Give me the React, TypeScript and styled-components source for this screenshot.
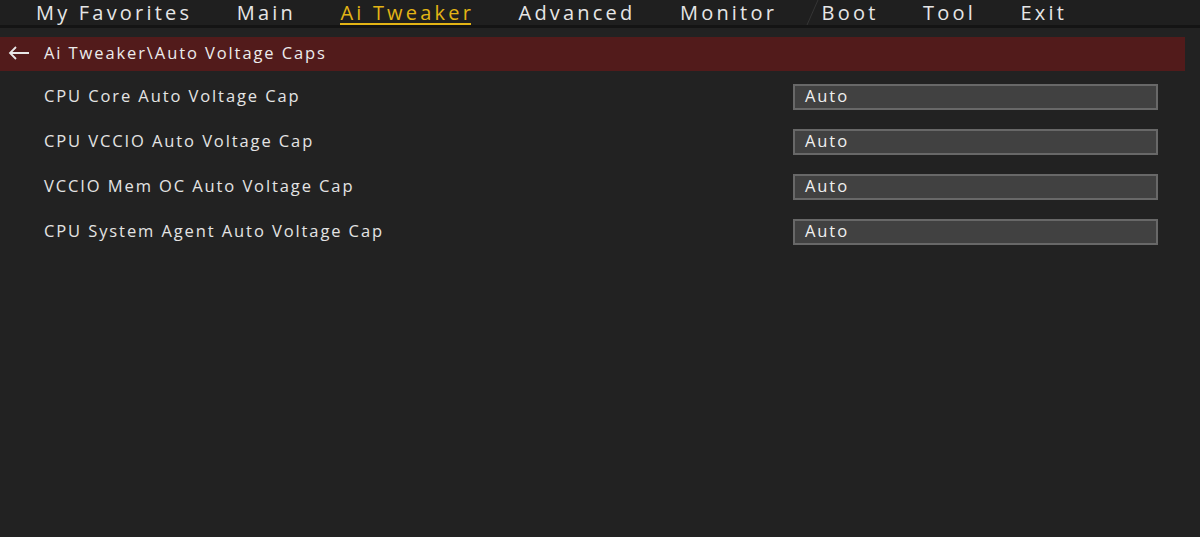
import styled, { createGlobalStyle } from "styled-components";

const GlobalStyle = createGlobalStyle`
  html, body {
    margin: 0;
    padding: 0;
    background: #222222;
  }
  body {
    font-family: "Open Sans", "Noto Sans", "DejaVu Sans", sans-serif;
    -webkit-font-smoothing: antialiased;
  }
`;

const tabs = [
  "My Favorites",
  "Main",
  "Ai Tweaker",
  "Advanced",
  "Monitor",
  "Boot",
  "Tool",
  "Exit",
];

const items = [
  "CPU Core Auto Voltage Cap",
  "CPU VCCIO Auto Voltage Cap",
  "VCCIO Mem OC Auto Voltage Cap",
  "CPU System Agent Auto Voltage Cap",
];

export default function App() {
  return (
    <Page>
      <GlobalStyle />
      <TabBar>
        {tabs.map((t) => (
          <Tab key={t} active={t === "Ai Tweaker"}>
            {t}
          </Tab>
        ))}
        <Slash width="14" height="25" viewBox="0 0 14 25">
          <path d="M1 25L12 0" stroke="#353535" strokeWidth="1" />
        </Slash>
      </TabBar>
      <Crumb>
        <svg width="22" height="14" viewBox="0 0 22 14">
          <path
            d="M21 7H2M8 1L2 7l6 6"
            fill="none"
            stroke="#e8e8e8"
            strokeWidth="1.8"
          />
        </svg>
        <span>Ai Tweaker\Auto Voltage Caps</span>
      </Crumb>
      <List>
        {items.map((label) => (
          <Row key={label}>
            <Label>{label}</Label>
            <Select>Auto</Select>
          </Row>
        ))}
      </List>
    </Page>
  );
}

const Page = styled.div`
  width: 1200px;
  height: 537px;
  overflow: hidden;
  background: #222222;
`;

const TabBar = styled.div`
  position: relative;
  height: 25px;
  background: #1f1f1f;
  border-bottom: 3px solid #141414;
  display: flex;
  align-items: flex-start;
  padding-left: 36px;
  gap: 47.5px;
`;

const Slash = styled.svg`
  position: absolute;
  left: 806px;
  top: 0;
`;

const Tab = styled.div<{ active?: boolean }>`
  font-size: 20px;
  line-height: 25px;
  height: 25px;
  letter-spacing: 3.2px;
  margin-right: -3px;
  color: ${(p) => (p.active ? "#e3b415" : "#e6e6e6")};
  position: relative;
  white-space: nowrap;

  &::after {
    content: "";
    display: ${(p) => (p.active ? "block" : "none")};
    position: absolute;
    left: 0;
    right: 3px;
    top: 23px;
    height: 2px;
    background: #e3b415;
  }
`;

const Crumb = styled.div`
  margin-top: 9px;
  width: 1185px;
  height: 34px;
  background: #521b1b;
  display: flex;
  align-items: center;
  gap: 14px;
  padding-left: 8px;
  padding-bottom: 3px;
  box-sizing: border-box;
  color: #ececec;
  font-size: 16.5px;
  letter-spacing: 1.9px;
`;

const List = styled.div`
  display: flex;
  flex-direction: column;
  gap: 19px;
  padding: 13px 0 0 44px;
`;

const Row = styled.div`
  display: flex;
  align-items: center;
  justify-content: space-between;
  width: 1114px;
  height: 26px;
`;

const Label = styled.div`
  color: #e4e4e4;
  font-size: 16.5px;
  letter-spacing: 1.9px;
  margin-top: -3px;
`;

const Select = styled.div`
  width: 365px;
  height: 26px;
  box-sizing: border-box;
  background: #414141;
  border: 2px solid #686868;
  color: #f0f0f0;
  font-size: 16.5px;
  letter-spacing: 1.9px;
  line-height: 20px;
  padding-left: 10px;
`;
